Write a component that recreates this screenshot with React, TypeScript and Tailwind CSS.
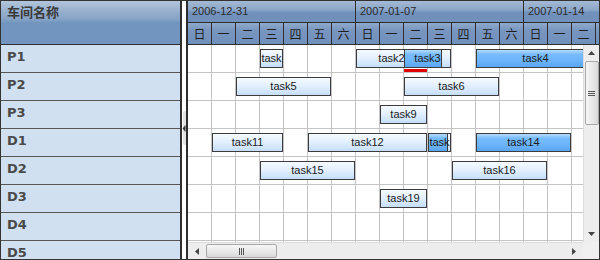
import React from "react";

type Task = { row: number; col: number; n: number; label: string; dark?: boolean; progress?: number };

const rows = ["P1", "P2", "P3", "D1", "D2", "D3", "D4", "D5"];
const weekdays = ["日", "一", "二", "三", "四", "五", "六"];
const weeks = ["2006-12-31", "2007-01-07", "2007-01-14"];

const tasks: Task[] = [
  { row: 0, col: 3, n: 1, label: "task" },
  { row: 0, col: 7, n: 3, label: "task2" },
  { row: 0, col: 9, n: 2, label: "task3", progress: 36 },
  { row: 0, col: 12, n: 5, label: "task4", dark: true },
  { row: 1, col: 2, n: 4, label: "task5" },
  { row: 1, col: 9, n: 4, label: "task6" },
  { row: 2, col: 8, n: 2, label: "task9" },
  { row: 3, col: 1, n: 3, label: "task11" },
  { row: 3, col: 5, n: 5, label: "task12" },
  { row: 3, col: 10, n: 1, label: "task", progress: 18 },
  { row: 3, col: 12, n: 4, label: "task14", dark: true },
  { row: 4, col: 3, n: 4, label: "task15" },
  { row: 4, col: 11, n: 4, label: "task16" },
  { row: 5, col: 8, n: 2, label: "task19" },
];

const light = "bg-[linear-gradient(to_bottom,#f5faff_0%,#e3f0ff_45%,#c6defa_100%)]";
const dark = "bg-[linear-gradient(to_bottom,#b5dbff_0%,#78bcff_25%,#69b2fb_70%,#5aa6f2_100%)]";

function TaskBar({ t }: { t: Task }) {
  return (
    <div
      className={`absolute top-[4px] h-[19px] border border-[#3c3c3c] overflow-hidden ${t.dark ? dark : light}`}
      style={{ left: t.col * 24, width: t.n * 24 - 1 }}
    >
      {t.progress !== undefined && (
        <div className={`absolute left-0 top-0 h-full border-r border-[#3c3c3c] ${dark}`} style={{ width: t.progress + 1 }} />
      )}
      <div className="relative h-full flex items-center justify-center whitespace-nowrap text-[11px] leading-none text-[#1a1a1a]">
        {t.label}
      </div>
    </div>
  );
}

export default function App() {
  return (
    <div className="w-[600px] h-[260px] border border-[#333] bg-white flex overflow-hidden font-['Liberation_Sans',sans-serif] text-[#222]">
      {/* Left panel */}
      <div className="w-[181px] shrink-0 border-r-2 border-[#2e2e2e] flex flex-col bg-[#d0e0f1]">
        <div className="h-[44px] shrink-0 border-b border-[#2e2e2e] bg-[linear-gradient(to_bottom,#b3c5db_0px,#98b0ce_10px,#86a3c6_18px,#7195bf_22px,#7195bf_100%)]">
          <div className="h-[21px] flex items-center pl-[6px] text-[13px] font-bold text-[#3a3a3a] font-['Noto_Sans_CJK_SC',sans-serif]">
            车间名称
          </div>
        </div>
        {rows.map((r) => (
          <div key={r} className="h-[28px] shrink-0 border-b border-[#555] pl-[6px] pt-[3px] text-[13px] leading-[18px] font-bold text-[#4a4a4a] font-['DejaVu_Sans',sans-serif]">
            {r}
          </div>
        ))}
      </div>

      {/* Splitter */}
      <div className="w-[4px] shrink-0 bg-white relative">
        <div className="absolute left-[1px] top-[110px] w-[3px] h-[34px] bg-[#e2e2e2] rounded-l-[2px]" />
        <svg className="absolute left-[0px] top-[124px]" width="4" height="7" viewBox="0 0 4 7">
          <path d="M3.5 0 L0.5 3.5 L3.5 7 Z" fill="#333" />
        </svg>
      </div>

      {/* Gantt */}
      <div className="w-[413px] shrink-0 border-l-2 border-[#2e2e2e] flex flex-col overflow-hidden">
        {/* date row */}
        <div className="h-[22px] shrink-0 flex border-b border-[#2e2e2e] bg-[linear-gradient(to_bottom,#a4b9d4_0%,#8ea8ca_40%,#7191bc_55%,#7191bc_100%)]">
          {weeks.map((w) => (
            <div key={w} className="w-[168px] shrink-0 h-full border-r border-[#2e2e2e] pl-[4px] flex items-center text-[11px] text-[#2a2a2a]">
              {w}
            </div>
          ))}
        </div>
        {/* weekday row */}
        <div className="h-[22px] shrink-0 flex border-b border-[#2e2e2e] bg-[linear-gradient(to_bottom,#8fa9ca_0%,#7896bf_35%,#6f8fbb_100%)]">
          {Array.from({ length: 18 }).map((_, i) => (
            <div key={i} className="w-[24px] shrink-0 h-full border-r border-[#2e2e2e] flex items-center justify-center text-[12px] text-[#1e1e1e] font-['Noto_Sans_CJK_SC',sans-serif]">
              {i < 17 ? weekdays[i % 7] : ""}
            </div>
          ))}
        </div>
        {/* body */}
        <div className="h-[197px] shrink-0 flex">
          <div className="w-[395px] shrink-0 overflow-hidden">
            {rows.map((r, ri) => (
              <div key={r} className="relative h-[28px] shrink-0 flex border-b border-[#c4c4c4]">
                {Array.from({ length: 17 }).map((_, ci) => (
                  <div key={ci} className="w-[24px] shrink-0 h-full border-r border-[#c4c4c4]" />
                ))}
                {tasks.filter((t) => t.row === ri).map((t, k) => (
                  <TaskBar key={k} t={t} />
                ))}
                {ri === 0 && <div className="absolute left-[216px] top-[24px] w-[23px] h-[3px] bg-[#e00000]" />}
              </div>
            ))}
          </div>
          {/* vertical scrollbar */}
          <div className="w-[16px] shrink-0 bg-[#ededed] border-l border-[#dcdcdc] flex flex-col items-center">
            <div className="h-[16px] w-full flex items-center justify-center">
              <svg width="7" height="4" viewBox="0 0 7 4"><path d="M0 4 L3.5 0 L7 4 Z" fill="#444" /></svg>
            </div>
            <div className="w-[14px] h-[64px] rounded-[2px] border border-[#a8a8a8] bg-[linear-gradient(to_right,#f6f6f6,#e6e6e6_60%,#d8d8d8)] flex flex-col items-center justify-center gap-[1px]">
              <div className="w-[7px] h-[1px] bg-[#555]" />
              <div className="w-[7px] h-[1px] bg-[#555]" />
              <div className="w-[7px] h-[1px] bg-[#555]" />
            </div>
            <div className="flex-1" />
            <div className="h-[16px] w-full flex items-center justify-center">
              <svg width="7" height="4" viewBox="0 0 7 4"><path d="M0 0 L3.5 4 L7 0 Z" fill="#444" /></svg>
            </div>
          </div>
        </div>
        {/* horizontal scrollbar */}
        <div className="h-[17px] shrink-0 flex">
          <div className="w-[395px] shrink-0 bg-[#ededed] border-t border-[#dcdcdc] flex items-center">
            <div className="w-[18px] h-full flex items-center justify-center">
              <svg width="4" height="7" viewBox="0 0 4 7"><path d="M4 0 L0 3.5 L4 7 Z" fill="#444" /></svg>
            </div>
            <div className="w-[71px] h-[14px] rounded-[2px] border border-[#a8a8a8] bg-[linear-gradient(to_bottom,#f6f6f6,#e6e6e6_60%,#d8d8d8)] flex items-center justify-center gap-[1px]">
              <div className="w-[1px] h-[7px] bg-[#555]" />
              <div className="w-[1px] h-[7px] bg-[#555]" />
              <div className="w-[1px] h-[7px] bg-[#555]" />
            </div>
            <div className="flex-1" />
            <div className="w-[18px] h-full flex items-center justify-center">
              <svg width="4" height="7" viewBox="0 0 4 7"><path d="M0 0 L4 3.5 L0 7 Z" fill="#444" /></svg>
            </div>
          </div>
          <div className="w-[16px] shrink-0 bg-[#f0f0f0]" />
        </div>
      </div>
    </div>
  );
}
